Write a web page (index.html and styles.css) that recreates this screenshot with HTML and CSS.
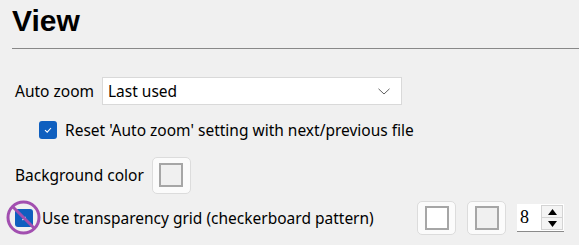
FILE: index.html
```html
<!DOCTYPE html>
<html>
<head>
<meta charset="utf-8">
<link rel="stylesheet" href="styles.css">
</head>
<body>
<div class="page">
  <h1 class="title">View</h1>
  <div class="rule"></div>
  <div class="rows">
    <div class="row row-zoom">
      <span class="label">Auto zoom</span>
      <div class="select">
        <span class="select-text">Last used</span>
        <svg class="chevron" width="12" height="7" viewBox="0 0 12 7"><path d="M0.5 0.8 L6 6 L11.5 0.8" fill="none" stroke="#606060" stroke-width="1"/></svg>
      </div>
    </div>
    <div class="row row-reset">
      <span class="check"><svg width="10" height="8" viewBox="0 0 10 8"><path d="M2 4.2 L4.2 6.2 L8 2" fill="none" stroke="#fff" stroke-width="1.1"/></svg></span>
      <span class="label">Reset 'Auto zoom' setting with next/previous file</span>
    </div>
    <div class="row row-bg">
      <span class="label">Background color</span>
      <div class="swatch"><span class="swatch-inner gray"></span></div>
    </div>
    <div class="row row-grid">
      <span class="check-wrap">
        <span class="check"><svg width="10" height="8" viewBox="0 0 10 8"><path d="M3.5 6 L6.5 3" fill="none" stroke="#fff" stroke-width="1.1"/></svg></span>
        <svg class="forbid" width="35" height="35" viewBox="0 0 35 35"><circle cx="17.5" cy="17.5" r="15.5" fill="none" stroke="#a24fb0" stroke-width="3"/><path d="M6.5 6.5 L28.5 28.5" stroke="#a24fb0" stroke-width="3"/></svg>
      </span>
      <span class="label grid-label">Use transparency grid (checkerboard pattern)</span>
      <div class="grid-controls">
        <div class="swatch"><span class="swatch-inner white"></span></div>
        <div class="swatch"><span class="swatch-inner gray"></span></div>
        <div class="spin">
          <span class="spin-value">8</span>
          <div class="spin-buttons">
            <span class="spin-btn"><svg width="9" height="6" viewBox="0 0 9 6"><path d="M0 6 L4.5 0 L9 6 Z" fill="#000"/></svg></span>
            <span class="spin-btn"><svg width="9" height="6" viewBox="0 0 9 6"><path d="M0 0 L4.5 6 L9 0 Z" fill="#000"/></svg></span>
          </div>
        </div>
      </div>
    </div>
  </div>
</div>
</body>
</html>
```
FILE: styles.css
```css
html, body {
  margin: 0;
  padding: 0;
  background: #f0f0f0;
  width: 579px;
  height: 245px;
  overflow: hidden;
}
.page {
  font-family: "Noto Sans", "Open Sans", sans-serif;
  font-size: 15.5px;
  color: #000;
}
.title {
  margin: 0;
  padding: 2px 0 0 12px;
  font-family: "Liberation Sans", Arial, sans-serif;
  font-weight: bold;
  font-size: 30px;
  line-height: 38px;
}
.rule {
  margin: 8px 0 0 12px;
  height: 1px;
  background: #888;
}
.rows {
  padding-left: 15px;
  display: flex;
  flex-direction: column;
}
.row {
  display: flex;
  align-items: center;
}
.row-zoom {
  margin-top: 28px;
  height: 28px;
  width: 387px;
}
.label {
  white-space: nowrap;
  line-height: 20px;
}
.select {
  margin-left: auto;
  width: 300px;
  height: 28px;
  box-sizing: border-box;
  background: #fff;
  border: 1px solid #d9d9d9;
  display: flex;
  align-items: center;
  justify-content: space-between;
  padding: 0 6px 0 5px;
}
.select-text {
  line-height: 20px;
}
.chevron {
  margin-right: 5px;
}
.row-reset {
  margin-top: 15px;
  padding-left: 24px;
  height: 20px;
}
.check {
  width: 18px;
  height: 18px;
  border-radius: 3px;
  background: #0f5fbf;
  display: flex;
  align-items: center;
  justify-content: center;
  flex: none;
}
.row-reset .label {
  margin-left: 8px;
}
.row-bg {
  margin-top: 16px;
  height: 38px;
}
.row-bg .swatch {
  margin-left: 8px;
}
.swatch {
  width: 37px;
  height: 35px;
  border: 1px solid #dcdcdc;
  border-radius: 5px;
  background: #fbfbfb;
  display: flex;
  align-items: center;
  justify-content: center;
  flex: none;
}
.swatch-inner {
  width: 20px;
  height: 20px;
  border: 2px solid #a6a6a6;
}
.swatch-inner.gray {
  background: #f0f0f0;
}
.swatch-inner.white {
  background: #fff;
}
.row-grid {
  margin-top: 6px;
  height: 36px;
}
.check-wrap {
  position: relative;
  width: 18px;
  height: 18px;
}
.forbid {
  position: absolute;
  left: -9px;
  top: -9px;
}
.grid-label {
  margin-left: 9px;
}
.grid-controls {
  margin-left: auto;
  margin-right: 15px;
  display: flex;
  align-items: center;
  gap: 11px;
}
.grid-controls .swatch {
  height: 32px;
}
.spin {
  width: 47px;
  height: 27px;
  background: #fff;
  border-bottom: 1px solid #8a8a8a;
  display: flex;
  align-items: center;
  justify-content: space-between;
}
.spin-value {
  font-family: "Liberation Serif", "Times New Roman", serif;
  font-size: 18px;
  padding-left: 3px;
}
.spin-buttons {
  display: flex;
  flex-direction: column;
  margin-right: 1px;
  border: 1px solid #d4d4d4;
  background: #f4f4f4;
}
.spin-btn {
  width: 20px;
  height: 11px;
  display: flex;
  align-items: center;
  justify-content: center;
}
.spin-btn + .spin-btn {
  border-top: 1px solid #d4d4d4;
}
```
